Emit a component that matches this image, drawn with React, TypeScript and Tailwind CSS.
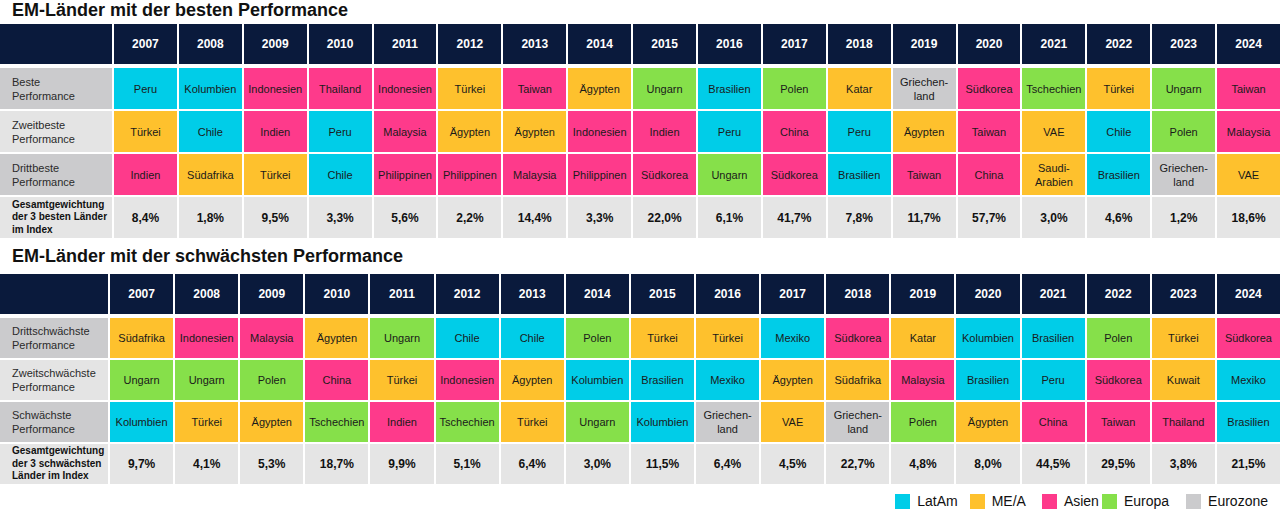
const years = [2007, 2008, 2009, 2010, 2011, 2012, 2013, 2014, 2015, 2016, 2017, 2018, 2019, 2020, 2021, 2022, 2023, 2024]

type Region = "L" | "M" | "A" | "E" | "Z"

const colors: Record<Region, string> = {
  L: "bg-[#00cde8]",
  M: "bg-[#fec12d]",
  A: "bg-[#fe3a8b]",
  E: "bg-[#86e04a]",
  Z: "bg-[#cbcbcd]",
}

// country -> region
const region: Record<string, Region> = {
  Peru: "L", Kolumbien: "L", Chile: "L", Brasilien: "L", Mexiko: "L",
  Türkei: "M", Ägypten: "M", Südafrika: "M", Katar: "M", VAE: "M", "Saudi-Arabien": "M", Kuwait: "M",
  Indonesien: "A", Thailand: "A", Taiwan: "A", Indien: "A", Malaysia: "A", Philippinen: "A", Südkorea: "A", China: "A",
  Ungarn: "E", Polen: "E", Tschechien: "E",
  Griechenland: "Z",
}

const label: Record<string, string[]> = {
  Griechenland: ["Griechen-", "land"],
  "Saudi-Arabien": ["Saudi-", "Arabien"],
}

const best = {
  rows: [
    { title: ["Beste", "Performance"], cells: ["Peru", "Kolumbien", "Indonesien", "Thailand", "Indonesien", "Türkei", "Taiwan", "Ägypten", "Ungarn", "Brasilien", "Polen", "Katar", "Griechenland", "Südkorea", "Tschechien", "Türkei", "Ungarn", "Taiwan"] },
    { title: ["Zweitbeste", "Performance"], cells: ["Türkei", "Chile", "Indien", "Peru", "Malaysia", "Ägypten", "Ägypten", "Indonesien", "Indien", "Peru", "China", "Peru", "Ägypten", "Taiwan", "VAE", "Chile", "Polen", "Malaysia"] },
    { title: ["Drittbeste", "Performance"], cells: ["Indien", "Südafrika", "Türkei", "Chile", "Philippinen", "Philippinen", "Malaysia", "Philippinen", "Südkorea", "Ungarn", "Südkorea", "Brasilien", "Taiwan", "China", "Saudi-Arabien", "Brasilien", "Griechenland", "VAE"] },
  ],
  totalTitle: ["Gesamtgewichtung", "der 3 besten Länder", "im Index"],
  totals: ["8,4%", "1,8%", "9,5%", "3,3%", "5,6%", "2,2%", "14,4%", "3,3%", "22,0%", "6,1%", "41,7%", "7,8%", "11,7%", "57,7%", "3,0%", "4,6%", "1,2%", "18,6%"],
}

const worst = {
  rows: [
    { title: ["Drittschwächste", "Performance"], cells: ["Südafrika", "Indonesien", "Malaysia", "Ägypten", "Ungarn", "Chile", "Chile", "Polen", "Türkei", "Türkei", "Mexiko", "Südkorea", "Katar", "Kolumbien", "Brasilien", "Polen", "Türkei", "Südkorea"] },
    { title: ["Zweitschwächste", "Performance"], cells: ["Ungarn", "Ungarn", "Polen", "China", "Türkei", "Indonesien", "Ägypten", "Kolumbien", "Brasilien", "Mexiko", "Ägypten", "Südafrika", "Malaysia", "Brasilien", "Peru", "Südkorea", "Kuwait", "Mexiko"] },
    { title: ["Schwächste", "Performance"], cells: ["Kolumbien", "Türkei", "Ägypten", "Tschechien", "Indien", "Tschechien", "Türkei", "Ungarn", "Kolumbien", "Griechenland", "VAE", "Griechenland", "Polen", "Ägypten", "China", "Taiwan", "Thailand", "Brasilien"] },
  ],
  totalTitle: ["Gesamtgewichtung", "der 3 schwächsten", "Länder im Index"],
  totals: ["9,7%", "4,1%", "5,3%", "18,7%", "9,9%", "5,1%", "6,4%", "3,0%", "11,5%", "6,4%", "4,5%", "22,7%", "4,8%", "8,0%", "44,5%", "29,5%", "3,8%", "21,5%"],
}

function Table({ data, cols, rowH }: { data: typeof best; cols: string; rowH: string }) {
  return (
    <div className={`grid ${cols} gap-x-[2px]`}>
      {/* header */}
      <div className="h-[40px] bg-[#0a1a3c]" />
      {years.map((y) => (
        <div key={y} className="h-[40px] bg-[#0a1a3c] flex items-center justify-center text-white font-bold text-[12px]">
          {y}
        </div>
      ))}
      <div className="col-span-19 h-[4px]" />
      {data.rows.map((r, ri) => (
        <div key={ri} className="contents">
          <div className={`${rowH} mb-[2px] flex flex-col justify-center pl-3 text-[11px] leading-[14px] text-[#2a2a2a] ${ri === 1 ? "bg-[#e4e4e4]" : "bg-[#cbcbcd]"}`}>
            {r.title.map((t) => (
              <span key={t}>{t}</span>
            ))}
          </div>
          {r.cells.map((c, ci) => (
            <div key={ci} className={`${rowH} mb-[2px] flex flex-col items-center justify-center text-[11px] leading-[14px] text-[#1a1a1a] ${colors[region[c]]}`}>
              {(label[c] ?? [c]).map((t) => (
                <span key={t}>{t}</span>
              ))}
            </div>
          ))}
        </div>
      ))}
      <div className={`${rowH} bg-[#e5e5e5] flex flex-col justify-center pl-3 text-[10px] leading-[12.5px] font-bold text-[#111]`}>
        {data.totalTitle.map((t) => (
          <span key={t}>{t}</span>
        ))}
      </div>
      {data.totals.map((t, i) => (
        <div key={i} className={`${rowH} bg-[#e5e5e5] flex items-center justify-center text-[12px] font-bold text-[#111]`}>
          {t}
        </div>
      ))}
    </div>
  )
}

const legend: [Region, string, string][] = [
  ["L", "LatAm", "ml-0"],
  ["M", "ME/A", "ml-[12px]"],
  ["A", "Asien", "ml-[16px]"],
  ["E", "Europa", "ml-[3px]"],
  ["Z", "Eurozone", "ml-[17px]"],
]

export default function App() {
  return (
    <main className="w-[1280px] h-[513px] bg-white overflow-hidden" style={{ fontFamily: '"Liberation Sans", Arial, sans-serif' }}>
      <h2 className="pl-[12px] h-[24px] text-[18px] leading-[20px] font-bold text-[#111]">EM-Länder mit der besten Performance</h2>
      <Table data={best} cols="grid-cols-[112px_repeat(18,1fr)]" rowH="h-[41px]" />
      <h2 className="pl-[12px] pt-[8px] h-[36px] text-[18px] leading-[20px] font-bold text-[#111]">EM-Länder mit der schwächsten Performance</h2>
      <Table data={worst} cols="grid-cols-[108px_repeat(18,1fr)]" rowH="h-[40px]" />
      <div className="flex justify-end items-center pr-[12px] mt-[7px] text-[14px] text-[#111]">
        {legend.map(([r, name, m]) => (
          <div key={r} className={`flex items-center ${m}`}>
            <span className={`w-[15px] h-[15px] mr-[7px] ${colors[r]}`} />
            <span>{name}</span>
          </div>
        ))}
      </div>
    </main>
  )
}
